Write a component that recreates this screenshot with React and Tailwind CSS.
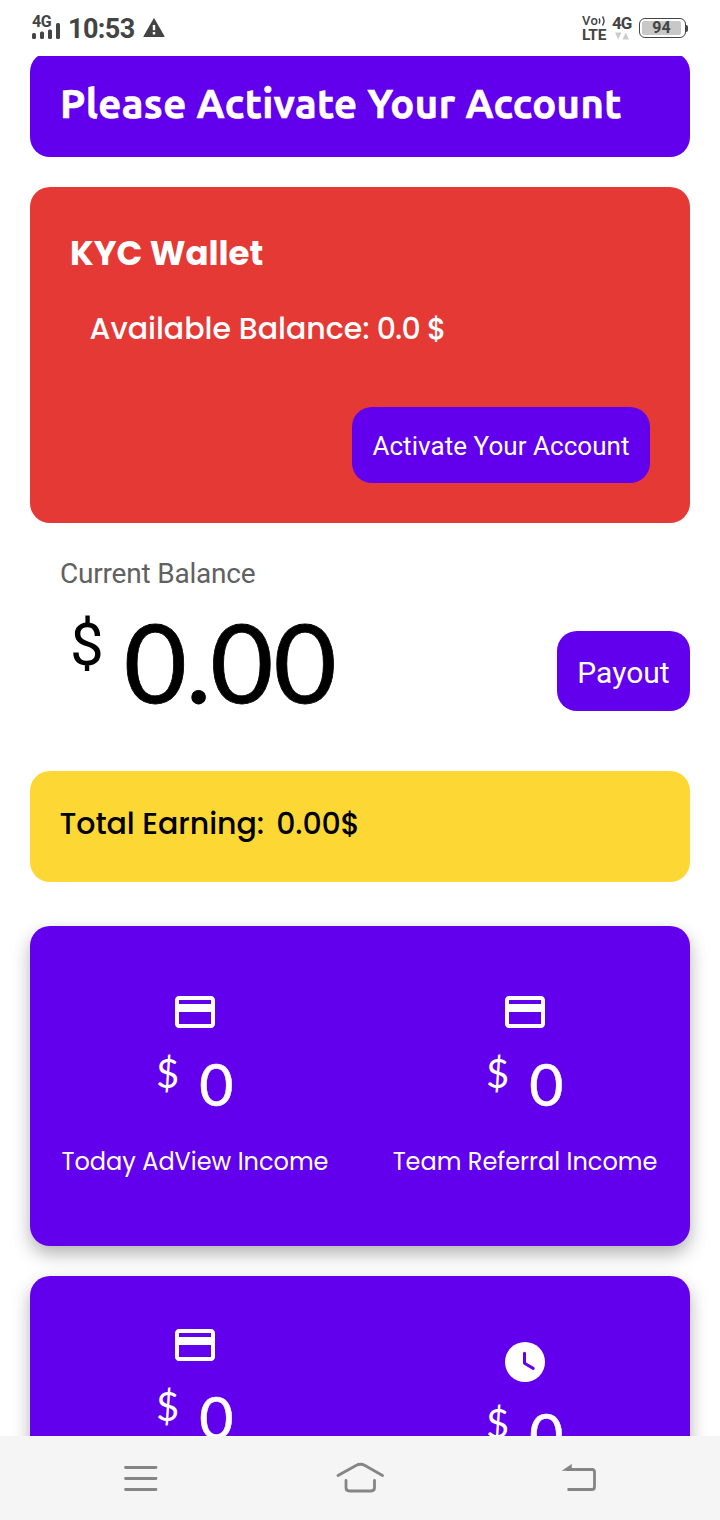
import { MdCreditCard } from "react-icons/md";

const POPPINS = "font-['Poppins','Inter',sans-serif]";

const ClockIcon = () => (
  <svg viewBox="0 0 48 48" className="size-12" fill="none">
    <circle cx="24" cy="24" r="20" fill="#fff" />
    <path
      d="M23.5 15.2v10l8.7 5.2"
      stroke="#6200ee"
      strokeWidth="3"
      strokeLinecap="round"
      strokeLinejoin="round"
    />
  </svg>
);

const StatusBar = () => (
  <header className="flex h-14 shrink-0 justify-between bg-white pl-8 pr-8 font-['Roboto',sans-serif] text-[#444]">
    <div className="flex">
      <div className="w-7 pt-[14px]">
        <div className="text-[16px] font-bold leading-[15px] tracking-[-0.4px]">4G</div>
        <svg width="28" height="16" viewBox="0 0 28 16" className="-mt-[6px] block" fill="#444">
          <rect x="0" y="10" width="4" height="6" rx="1.5" />
          <rect x="8" y="8.5" width="4" height="7.5" rx="1.5" />
          <rect x="16" y="6.5" width="4" height="9.5" rx="1.5" />
          <rect x="24" y="0" width="4" height="16" rx="1.5" />
        </svg>
      </div>
      <div className="ml-2 pt-[14px] text-[27px] font-bold leading-[30px] tracking-[-0.6px]">10:53</div>
      <svg width="22" height="20" viewBox="0 0 22 20" className="ml-2 mt-[18px]">
        <path d="M11 1 21 18.5H1Z" fill="#444" stroke="#444" strokeWidth="1.2" strokeLinejoin="round" />
        <path d="M11 7v5.2M11 14v2.6" stroke="#fff" strokeWidth="2.4" />
      </svg>
    </div>

    <div className="flex">
      <div className="w-[26px] pt-[14px]">
        <div className="flex items-center text-[13px] font-medium leading-[13px]">
          <span>V</span>
          <span>o</span>
          <svg width="8" height="12" viewBox="0 0 8 12" fill="none" stroke="#444" strokeWidth="1.4">
            <path d="M1 3.5q1.6 2.5 0 5M4.5 1.5q3 4.5 0 9" />
          </svg>
        </div>
        <div className="text-[15.5px] font-bold leading-[16px] tracking-[-0.3px]">LTE</div>
      </div>
      <div className="ml-[4px] w-5 pt-[15px]">
        <div className="text-[17px] font-bold leading-[17px] tracking-[-0.9px]">4G</div>
        <svg width="14" height="8" viewBox="0 0 14 8" className="ml-[3px]" fill="#ccc">
          <path d="M0 0.5h6.5L3.2 7.5ZM7.5 7.5H14L10.8 0.5Z" />
        </svg>
      </div>
      <div className="ml-[7px] mt-[18px] flex h-5 items-center">
        <div className="flex h-5 w-[47px] rounded-[6px] border-[1.5px] border-[#444] p-[2px]">
          <div className="w-[39px] rounded-[2px] bg-[#c8c8c8] text-center text-[16px] font-bold leading-[14px]">
            94
          </div>
        </div>
        <div className="h-[7px] w-[2px] rounded-r-sm bg-[#444]" />
      </div>
    </div>
  </header>
);

const Stat = ({ icon, label, className }) => (
  <div className={`flex w-1/2 flex-col items-center ${className}`}>
    {icon}
    <div className="flex h-[80px] w-[77px] justify-between font-['Lato',sans-serif]">
      <span className="-ml-[0.5px] mt-[13px] text-[40px] leading-[48px]">$</span>
      <span className="mt-[13px] text-[59px] leading-[70px] [-webkit-text-stroke:0.5px_white]">0</span>
    </div>
    <div className={`mt-[28px] whitespace-nowrap text-[24px] leading-[36px] ${POPPINS}`}>{label}</div>
  </div>
);

export default function App() {
  return (
    <div className="flex h-[1520px] w-[720px] flex-col overflow-hidden bg-white">
      <StatusBar />

      <main className="flex-1 overflow-hidden px-[30px]">
        {/* ACTIVATION BANNER */}
        <section className="-mt-1 h-[105px] rounded-[20px] bg-[#6200ee] pl-[30px] pt-[28px]">
          <h1 className="whitespace-nowrap font-['Ubuntu','Noto_Sans',sans-serif] text-[40px] font-bold leading-[48px] tracking-[0.41px] text-white [-webkit-text-stroke:0.6px_white]">
            Please Activate Your Account
          </h1>
        </section>

        {/* KYC WALLET */}
        <section className="mt-[30px] flex h-[336px] flex-col rounded-[20px] bg-[#e53935] p-10 text-white">
          <h2 className={`mt-px text-[34px] font-bold leading-[50px] ${POPPINS}`}>KYC Wallet</h2>
          <p className={`ml-[19.5px] mt-[28px] text-[30px] font-medium leading-[46px] ${POPPINS}`}>
            Available Balance:<span className="tracking-[-0.8px]"> 0.0 $</span>
          </p>
          <button className="mt-auto h-[76px] w-[298px] self-end whitespace-nowrap rounded-[20px] bg-[#6200ee] pt-[2px] font-['Roboto',sans-serif] text-[26px] tracking-[0.05px]">
            Activate Your Account
          </button>
        </section>

        {/* CURRENT BALANCE */}
        <section className="flex h-[248px] justify-between font-['Roboto',sans-serif]">
          <div className="pl-[30px] pt-[34px]">
            <div className="text-[28px] leading-[34px] tracking-[-0.2px] text-[#616161]">Current Balance</div>
            <div className="flex pl-[10px] text-black">
              <span className="mt-[18px] text-[60px] leading-[72px]">$</span>
              <span className="ml-[20px] mt-[3px] font-['Lato',sans-serif] text-[109px] leading-[134px] [-webkit-text-stroke:0.8px_black]">
                <span className="tracking-[-1.2px]">0.</span>00
              </span>
            </div>
          </div>
          <button className="mt-[108px] h-20 w-[133px] rounded-[20px] bg-[#6200ee] pt-[3px] text-[30px] text-white">
            Payout
          </button>
        </section>

        <section
          className={`h-[111px] whitespace-pre rounded-[20px] bg-[#fdd835] pl-[29.5px] pt-[30px] text-[30px] font-medium leading-[46px] text-black ${POPPINS}`}
        >
          <span className="tracking-[-0.07px]">Total Earning:</span>
          <span className="tracking-[-0.2px] [word-spacing:-1.4px]">{"  0.00$"}</span>
        </section>

        {/* INCOME CARDS */}
        <section className="mt-[44px] flex h-[320px] rounded-[20px] bg-[#6200ee] text-white shadow-[0_8px_18px_rgba(0,0,0,0.3)]">
          <Stat className="pt-[62px]" icon={<MdCreditCard className="size-12" />} label="Today AdView Income" />
          <Stat className="pt-[62px]" icon={<MdCreditCard className="size-12" />} label="Team Referral Income" />
        </section>
        <section className="mt-[30px] flex h-[320px] rounded-[20px] bg-[#6200ee] text-white shadow-[0_8px_18px_rgba(0,0,0,0.3)]">
          <Stat className="pt-[45px]" icon={<MdCreditCard className="size-12" />} />
          <Stat className="pt-[62px]" icon={<ClockIcon />} />
        </section>
      </main>

      <nav className="flex h-[84px] shrink-0 items-center justify-between bg-[#f5f5f5] px-[116px]">
        <svg width="48" height="48" viewBox="0 0 48 48" fill="none" stroke="#858585" strokeWidth="2.8" strokeLinecap="round">
          <path d="M9.5 13.5h30.5M9.5 24.5h30.5M9.5 35.5h30.5" />
        </svg>
        <svg width="48" height="48" viewBox="0 0 48 48" fill="none" stroke="#858585" strokeWidth="2.8" strokeLinecap="round" strokeLinejoin="round">
          <path d="M2 21.5 20 11.5Q24.5 9 29 11.5L46.5 21.5" />
          <path d="M10 26.5v7q0 3.5 3.5 3.5h21.5q3.5 0 3.5-3.5v-7" />
        </svg>
        <svg width="48" height="48" viewBox="0 0 48 48" fill="none" stroke="#858585" strokeWidth="2.8" strokeLinejoin="round">
          <path d="M10 15.5h26q2.5 0 2.5 2.5v15q0 2.5-2.5 2.5H11.5" />
          <path d="M6.5 16.5 15.5 10.5v6Z" fill="#858585" strokeWidth="0.6" />
        </svg>
      </nav>
    </div>
  );
}
